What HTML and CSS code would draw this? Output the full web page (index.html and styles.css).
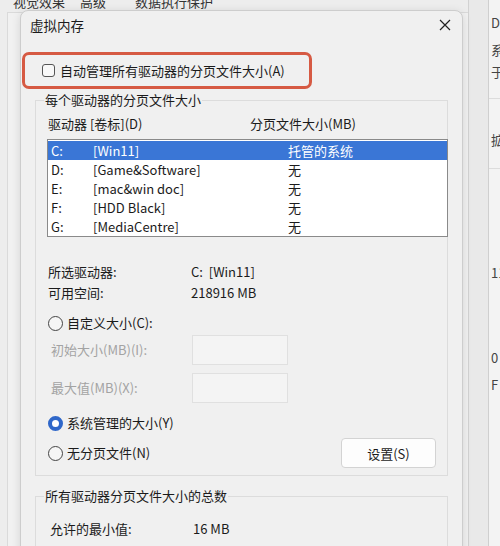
FILE: index.html
```html
<!DOCTYPE html>
<html lang="zh-CN">
<head>
  <meta charset="UTF-8">
  <title>虚拟内存</title>
  <link rel="stylesheet" href="styles.css">
</head>
<body>

<div class="desk">

  <!-- ventana de atrás: opciones de rendimiento -->
  <div class="back-win">
    <div class="tabs">
      <span class="tab t1">视觉效果</span>
      <span class="tab t2">高级</span>
      <span class="tab t3">数据执行保护</span>
    </div>
    <div class="tab-panel"></div>
  </div>

  <div class="side-win">
    <div class="side-txt s1">De</div>
    <div class="side-txt s2">系</div>
    <div class="side-txt s3">于</div>
    <div class="side-line l1"></div>
    <div class="side-txt s4">拡</div>
    <div class="side-line l2"></div>
    <div class="side-txt s5">11</div>
    <div class="side-txt s6">0</div>
    <div class="side-txt s7">F</div>
  </div>

  <!-- dialogo principal -->
  <div class="dialog">
    <div class="titlebar">
      <span class="title">虚拟内存</span>
      <svg class="close" width="12" height="12" viewBox="0 0 12 12">
        <path d="M1 1 L11 11 M11 1 L1 11" stroke="#222" stroke-width="1.2" fill="none"/>
      </svg>
    </div>

    <div class="highlight">
      <span class="check"></span>
      <span>自动管理所有驱动器的分页文件大小(A)</span>
    </div>

    <fieldset class="group g1">
      <legend>每个驱动器的分页文件大小</legend>

      <div class="list-head">
        <span class="col-drive">驱动器 [卷标](D)</span>
        <span class="col-size">分页文件大小(MB)</span>
      </div>

      <div class="listbox">
        <div class="row selected"><span class="c1">C:</span><span class="c2">[Win11]</span><span class="c3">托管的系统</span></div>
        <div class="row"><span class="c1">D:</span><span class="c2">[Game&amp;Software]</span><span class="c3">无</span></div>
        <div class="row"><span class="c1">E:</span><span class="c2">[mac&amp;win doc]</span><span class="c3">无</span></div>
        <div class="row"><span class="c1">F:</span><span class="c2">[HDD Black]</span><span class="c3">无</span></div>
        <div class="row"><span class="c1">G:</span><span class="c2">[MediaCentre]</span><span class="c3">无</span></div>
      </div>

      <div class="info first"><span class="lbl">所选驱动器:</span><span>C:&nbsp;&nbsp;[Win11]</span></div>
      <div class="info"><span class="lbl">可用空间:</span><span>218916 MB</span></div>

      <div class="radio-row custom"><span class="radio"></span><span>自定义大小(C):</span></div>

      <div class="field f1"><span class="flbl">初始大小(MB)(I):</span><span class="box"></span></div>
      <div class="field f2"><span class="flbl">最大值(MB)(X):</span><span class="box"></span></div>

      <div class="radio-row sys"><span class="radio on"></span><span>系统管理的大小(Y)</span></div>

      <div class="radio-row last">
        <span class="radio"></span><span>无分页文件(N)</span>
        <button class="btn">设置(S)</button>
      </div>
    </fieldset>

    <fieldset class="group g2">
      <legend>所有驱动器分页文件大小的总数</legend>
      <div class="info"><span class="lbl">允许的最小值:</span><span>16 MB</span></div>
    </fieldset>
  </div>

</div>

</body>
</html>
```

FILE: styles.css
```css
body {
  margin: 0;
  font-family: "Noto Sans CJK SC", "Noto Sans", sans-serif;
  font-size: 13px;
  color: #1b1b1b;
}

.desk {
  position: relative;
  width: 500px;
  height: 546px;
  overflow: hidden;
  background-color: #e9e9e9;
}

.back-win {
  position: absolute;
  left: 0;
  top: 0;
  width: 468px;
  height: 546px;
  background-color: #ededed;
  border-right: 1px solid #d2d2d2;
}

.tab {
  position: absolute;
  top: -7px;
  line-height: 18px;
  color: #333;
}

.t1 { left: 13px; }
.t2 { left: 80px; }
.t3 { left: 135px; }

.tab-panel {
  position: absolute;
  left: 7px;
  top: 12px;
  right: 0;
  bottom: 0;
  background-color: #f1f1f1;
  border-left: 1px solid #dadada;
  border-top: 1px solid #dadada;
}

.side-win {
  position: absolute;
  left: 488px;
  top: 0;
  width: 40px;
  height: 546px;
  background-color: #f3f3f3;
  border-left: 1px solid #cfcfcf;
}

.side-txt {
  position: absolute;
  left: 2px;
  line-height: 18px;
  color: #444;
}

.s1 { top: 14px; }
.s2 { top: 41px; }
.s3 { top: 63px; }
.s4 { top: 131px; }
.s5 { top: 264px; }
.s6 { top: 349px; }
.s7 { top: 376px; }

.side-line {
  position: absolute;
  left: 0;
  right: 0;
  height: 1px;
  background-color: #dcdcdc;
}

.l1 { top: 98px; }
.l2 { top: 168px; }

.dialog {
  position: absolute;
  left: 20px;
  top: 10px;
  width: 441px;
  height: 600px;
  background-color: #f0f0f0;
  border: 1px solid #cdcdcd;
  border-radius: 8px;
  box-shadow: 0 2px 10px rgba(0, 0, 0, 0.12);
}

.titlebar {
  display: flex;
  justify-content: space-between;
  align-items: center;
  height: 28px;
  padding: 0 11px 0 9px;
}

.title {
  font-size: 13.5px;
  line-height: 18px;
}

.highlight {
  display: flex;
  align-items: center;
  width: 284px;
  height: 31px;
  margin: 13px 0 0 1px;
  border: 3px solid #d65a43;
  border-radius: 7px;
  line-height: 18px;
}

.check {
  width: 11px;
  height: 11px;
  margin: 0 5px 0 17px;
  border: 1px solid #555;
  border-radius: 3px;
  background-color: #f8f8f8;
}

.group {
  margin: 2px 14px 0 14px;
  padding: 0 11px 0 12px;
  border: 1px solid #dcdcdc;
  border-radius: 0;
}

.group legend {
  padding: 0 1px;
  margin-left: -4px;
  line-height: 18px;
}

.list-head {
  display: flex;
  margin-top: 6px;
  line-height: 18px;
}

.col-drive {
  width: 202px;
}

.listbox {
  margin: 6px -12px 0 -1px;
  padding-top: 1px;
  height: 95px;
  background-color: #fff;
  border: 1px solid #8a8a8a;
}

.row {
  display: flex;
  height: 19px;
  line-height: 19px;
  padding-left: 3px;
}

.row.selected {
  background-color: #3a76d6;
  color: #fff;
}

.c1 { width: 42px; }
.c2 { width: 195px; }

.info {
  display: flex;
  line-height: 21px;
}

.info.first {
  margin-top: 24px;
}

.lbl {
  width: 143px;
}

.radio-row {
  display: flex;
  align-items: center;
  height: 22px;
  line-height: 18px;
}

.radio {
  box-sizing: border-box;
  width: 15px;
  height: 15px;
  margin-right: 4px;
  border: 1px solid #444;
  border-radius: 50%;
  background-color: #f6f6f6;
}

.radio.on {
  border: 4px solid #2f67c9;
  background-color: #fff;
}

.custom { margin-top: 9px; }
.sys { margin-top: 9px; }

.radio-row.last {
  height: 30px;
  margin-top: 4px;
  margin-bottom: 7px;
}

.field {
  display: flex;
  align-items: center;
  height: 30px;
  color: #a3a3a3;
  line-height: 18px;
}

.f1 { margin-top: 1px; }
.f2 { margin-top: 8px; }

.flbl {
  width: 141px;
  padding-left: 3px;
}

.box {
  box-sizing: border-box;
  width: 96px;
  height: 30px;
  background-color: #f4f4f4;
  border: 1px solid #e0e0e0;
}

.btn {
  margin-left: auto;
  width: 95px;
  height: 30px;
  font-family: inherit;
  font-size: 13px;
  color: #1b1b1b;
  background-color: #fdfdfd;
  border: 1px solid #d3d3d3;
  border-radius: 4px;
}

.g2 {
  margin-top: 11px;
  height: 80px;
}

.g2 .info {
  margin-top: 13px;
  padding-left: 2px;
}
```
